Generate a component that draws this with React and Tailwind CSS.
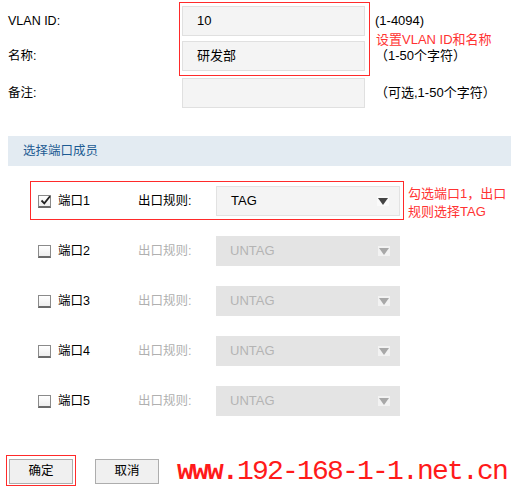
import React from "react";

const font = { fontFamily: '"Liberation Sans", "Noto Sans CJK SC", sans-serif' };

function Checkbox({ checked }) {
  return (
    <span className="relative inline-block w-[13px] h-[13px] shrink-0 border border-[#8a8a8a] border-b-2 border-b-[#6a6a6a] bg-gradient-to-b from-white to-[#eeeeee]">
      {checked && (
        <svg className="absolute left-[1px] top-[-1px]" width="11" height="11" viewBox="0 0 11 11">
          <path d="M1.5 5.5 L4.3 8.3 L10 1.2" stroke="#222" strokeWidth="1.8" fill="none" />
        </svg>
      )}
    </span>
  );
}

function Arrow({ disabled }) {
  return (
    <span className={`flex items-center justify-center w-[12px] h-[10px] ${disabled ? "bg-[#f2f2f2]" : "bg-[#fafafa]"}`}>
      <svg width="10" height="7" viewBox="0 0 10 7">
        <path d="M0 0 H10 L5 7 Z" fill={disabled ? "#a8a8a8" : "#444"} />
      </svg>
    </span>
  );
}

function FormRow({ label, value, hint, className = "" }) {
  return (
    <div className={`flex items-center h-[30px] ${className}`}>
      <div className="w-[182px] pl-[8px] text-[12.5px] text-black">{label}</div>
      <div className="w-[183px] h-[30px] border border-[#e0e0e0] bg-[#f4f4f4] flex items-center pl-[14px] text-[13px] text-black">
        {value}
      </div>
      <div className="ml-[10px] text-[13px] text-black">{hint}</div>
    </div>
  );
}

function PortRow({ n, checked }) {
  const disabled = !checked;
  return (
    <div className="relative flex items-center h-[50px] pl-[38px]">
      <Checkbox checked={checked} />
      <div className="w-[80px] ml-[7px] text-[12.5px] text-black">端口{n}</div>
      <div className={`w-[78px] text-[12.5px] ${disabled ? "text-[#b0b0b0]" : "text-black"}`}>出口规则:</div>
      <div
        className={`w-[184px] h-[30px] flex items-center justify-between pl-[14px] pr-[10px] text-[13px] ${
          disabled ? "bg-[#e4e4e4] text-[#b4b4b4]" : "bg-[#f4f4f4] border border-[#e2e2e2] text-black"
        }`}
      >
        <span>{checked ? "TAG" : "UNTAG"}</span>
        <Arrow disabled={disabled} />
      </div>
      {checked && (
        <>
          <div className="absolute left-[30px] top-[5px] w-[374px] h-[39px] border border-[#ff2a2a] pointer-events-none" />
          <div className="absolute left-[408px] top-[9px] w-[102px] text-[13px] leading-[18px] text-[#ff3333]">
            勾选端口1，出口规则选择TAG
          </div>
        </>
      )}
    </div>
  );
}

export default function App() {
  return (
    <div className="relative w-[511px] h-[487px] bg-white overflow-hidden flex flex-col" style={font}>
      <div className="relative flex flex-col pt-[6px]">
        <FormRow label="VLAN ID:" value="10" hint="(1-4094)" />
        <FormRow label="名称:" value="研发部" hint="（1-50个字符）" className="mt-[5px]" />
        <FormRow label="备注:" value="" hint="（可选,1-50个字符）" className="mt-[7px]" />
        <div className="absolute left-[179px] top-[2px] w-[191px] h-[74px] border border-[#ff2a2a] pointer-events-none" />
        <div className="absolute left-[376px] top-[30px] text-[13px] text-[#ff3333]">设置VLAN ID和名称</div>
      </div>

      <div className="mt-[28px] ml-[8px] h-[30px] bg-[#e3ebf2] flex items-center pl-[15px] text-[12.5px] text-[#1d5b93]">
        选择端口成员
      </div>

      <div className="mt-[10px] flex flex-col">
        <PortRow n={1} checked />
        <PortRow n={2} />
        <PortRow n={3} />
        <PortRow n={4} />
        <PortRow n={5} />
      </div>

      <div className="mt-[30px] flex items-center pl-[9px]">
        <div className="relative">
          <button className="w-[64px] h-[25px] bg-[#f0f0f0] border border-[#adadad] text-[12.5px] text-black">确定</button>
          <div className="absolute left-[-3px] top-[-3px] w-[70px] h-[31px] border border-[#ff2a2a] pointer-events-none" />
        </div>
        <button className="ml-[22px] w-[64px] h-[25px] bg-[#f0f0f0] border border-[#adadad] text-[12.5px] text-black">取消</button>
        <div
          className="ml-[18px] mt-[2px] text-[28px] leading-[28px] tracking-[-1.8px] text-[#ff1a1a] whitespace-nowrap"
          style={{ fontFamily: '"Liberation Mono", monospace' }}
        >
          <span className="font-bold">www.</span>192-168-1-1.net.cn
        </div>
      </div>
    </div>
  );
}
